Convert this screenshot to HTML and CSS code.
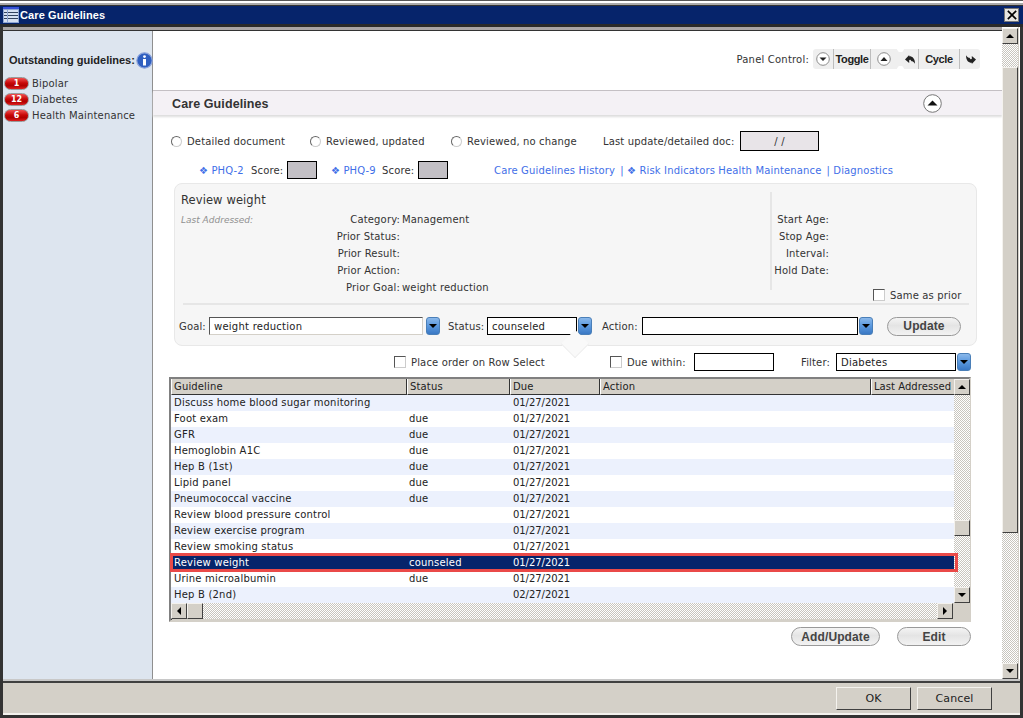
FILE: index.html
```html
<!DOCTYPE html>
<html lang="en">
<head>
<meta charset="utf-8">
<title>Care Guidelines</title>
<link rel="stylesheet" href="styles.css">
</head>
<body>
<div class="window">
  <div class="topedge"></div>
  <header class="titlebar">
    <svg class="appicon" viewBox="0 0 16 16" width="16" height="16">
      <rect x="0" y="0" width="16" height="16" fill="#8fa6d4"/>
      <rect x="0" y="0" width="16" height="2" fill="#3a52d8"/>
      <rect x="1" y="3" width="3" height="12" fill="#d6e0f2"/>
      <rect x="5" y="3" width="10" height="12" fill="#d6e0f2"/>
      <path d="M1 5h3v1H1zM1 8h3v1H1zM1 11h3v1H1zM5 5h10v1H5zM5 8h10v1H5zM5 11h10v1H5z" fill="#33435f"/>
    </svg>
    <span class="titletext">Care Guidelines</span>
    <span class="closebtn"><svg viewBox="0 0 12 12" width="10" height="10"><path d="M1 1l10 10M11 1L1 11" stroke="#000" stroke-width="2"/></svg></span>
  </header>
  <div class="midrow">
    <div class="leftcol">
      <div class="greybar"></div>
      <div class="columns">
        <aside class="sidebar">
          <div class="outstanding"><span>Outstanding guidelines:</span>
            <svg class="infoicon" viewBox="0 0 17 17" width="17" height="17"><circle cx="8.5" cy="8.5" r="7.7" fill="#2f5fc0" stroke="#8fa6dc" stroke-width="1.2"/><circle cx="8.5" cy="4.6" r="1.4" fill="#fff"/><rect x="7" y="7" width="3" height="6.5" fill="#fff"/></svg>
          </div>
          <div class="sideitem"><span class="pill">1</span><span>Bipolar</span></div>
          <div class="sideitem"><span class="pill">12</span><span>Diabetes</span></div>
          <div class="sideitem"><span class="pill">6</span><span>Health Maintenance</span></div>
        </aside>
        <main class="main">
          <div class="panelctl">
            <span class="pclabel">Panel Control:</span>
            <div class="toolbar">
              <span class="tseg tcirc"><svg viewBox="0 0 14 14" width="14" height="14"><circle cx="7" cy="7" r="6.3" fill="#fff" stroke="#8c8c8c"/><path d="M3.5 5.5h7L7 9z" fill="#222"/></svg></span>
              <span class="tseg ttext ttoggle">Toggle</span>
              <span class="tseg tcirc tcirc2"><svg viewBox="0 0 14 14" width="14" height="14"><circle cx="7" cy="7" r="6.3" fill="#fff" stroke="#8c8c8c"/><path d="M3.5 9h7L7 5z" fill="#222"/></svg></span>
              <span class="notch"></span>
              <span class="tseg tarrow"><svg viewBox="0 0 10 9" width="10" height="9"><path d="M0 4.500L4.200 0v1.200C7.800 1.200 10 3.800 10 8.800 8.800 6.800 7.500 6.200 6.500 6.200L5.500 4.800 4.200 5v3z" fill="#222"/></svg></span>
              <span class="tseg ttext tcycle">Cycle</span>
              <span class="tseg tarrow tlast"><svg viewBox="0 0 10 9" width="10" height="9"><path d="M10 4.500L5.800 9V7.800C2.200 7.800 0 5.200 0 .2 1.200 2.200 2.500 2.800 3.500 2.800L4.500 4.200 5.800 4V1z" fill="#222"/></svg></span>
            </div>
          </div>
          <div class="sectionhead">
            <h1>Care Guidelines</h1>
            <svg class="collapse" viewBox="0 0 19 19" width="19" height="19"><circle cx="9.500" cy="9.500" r="8.800" fill="#fff" stroke="#777"/><path d="M4.500 11.500h10L9.500 6.500z" fill="#111"/></svg>
          </div>
          <div class="radiorow">
            <span class="radio"></span><span class="rl1">Detailed document</span>
            <span class="radio"></span><span class="rl2">Reviewed, updated</span>
            <span class="radio"></span><span class="rl3">Reviewed, no change</span>
            <span class="lastdoc">Last update/detailed doc:</span>
            <span class="datebox">/ /</span>
          </div>
          <div class="linkrow">
            <a class="lk1">❖ PHQ-2</a><span class="score1">Score:</span><span class="scorebox"></span>
            <a class="lk2">❖ PHQ-9</a><span class="score1">Score:</span><span class="scorebox"></span>
            <a class="lk3">Care Guidelines History</a><a class="lk4">| ❖ Risk Indicators Health Maintenance</a><a class="lk4">| Diagnostics</a>
          </div>
          <section class="detail">
            <div class="detailtop">
              <div class="detailleft">
                <div class="dtitle">Review weight</div>
                <div class="dgrid">
                  <span class="lastaddr">Last Addressed:</span><span class="dlabel">Category:</span><span class="dval">Management</span>
                  <span></span><span class="dlabel">Prior Status:</span><span class="dval"></span>
                  <span></span><span class="dlabel">Prior Result:</span><span class="dval"></span>
                  <span></span><span class="dlabel">Prior Action:</span><span class="dval"></span>
                  <span></span><span class="dlabel">Prior Goal:</span><span class="dval">weight reduction</span>
                </div>
              </div>
              <div class="detailright">
                <div class="agegrid">
                  <span>Start Age:</span><span>Stop Age:</span><span>Interval:</span><span>Hold Date:</span>
                </div>
              </div>
            </div>
            <label class="sameprior"><span class="check"></span><span>Same as prior</span></label>
            <div class="rule"></div>
            <div class="formrow">
              <span class="fl-goal">Goal:</span>
              <span class="field f-goal sunken">weight reduction</span><span class="dd dd-goal"></span>
              <span class="fl-status">Status:</span>
              <span class="field f-status">counseled</span><span class="dd"></span>
              <span class="fl-action">Action:</span>
              <span class="field f-action"></span><span class="dd"></span>
              <span class="pillbtn updatebtn">Update</span>
            </div>
          </section>
          <div class="filterrow">
            <label class="placeorder"><span class="check"></span><span>Place order on Row Select</span></label>
            <label class="duewithin"><span class="check"></span><span>Due within:</span></label>
            <span class="field f-due"></span>
            <span class="fl-filter">Filter:</span>
            <span class="field f-filter">Diabetes</span><span class="dd"></span>
          </div>
          <div class="grid">
            <div class="gridbody">
              <div class="gridmain">
                <div class="ghead">
                  <span>Guideline</span><span>Status</span><span>Due</span><span>Action</span><span>Last Addressed</span>
                </div>
                <div class="grow odd"><span>Discuss home blood sugar monitoring</span><span></span><span>01/27/2021</span></div>
                <div class="grow"><span>Foot exam</span><span>due</span><span>01/27/2021</span></div>
                <div class="grow odd"><span>GFR</span><span>due</span><span>01/27/2021</span></div>
                <div class="grow"><span>Hemoglobin A1C</span><span>due</span><span>01/27/2021</span></div>
                <div class="grow odd"><span>Hep B (1st)</span><span>due</span><span>01/27/2021</span></div>
                <div class="grow"><span>Lipid panel</span><span>due</span><span>01/27/2021</span></div>
                <div class="grow odd"><span>Pneumococcal vaccine</span><span>due</span><span>01/27/2021</span></div>
                <div class="grow"><span>Review blood pressure control</span><span></span><span>01/27/2021</span></div>
                <div class="grow odd"><span>Review exercise program</span><span></span><span>01/27/2021</span></div>
                <div class="grow"><span>Review smoking status</span><span></span><span>01/27/2021</span></div>
                <div class="grow selected"><span>Review weight</span><span>counseled</span><span>01/27/2021</span></div>
                <div class="grow"><span>Urine microalbumin</span><span>due</span><span>01/27/2021</span></div>
                <div class="grow odd"><span>Hep B (2nd)</span><span></span><span>02/27/2021</span></div>
              </div>
              <div class="vscroll">
                <span class="sbtn"><i class="tri up"></i></span>
                <span class="strack t1"></span>
                <span class="sbtn"></span>
                <span class="strack t2"></span>
                <span class="sbtn"><i class="tri down"></i></span>
              </div>
            </div>
            <div class="hscroll">
              <span class="sbtn"><i class="tri left"></i></span>
              <span class="sbtn"></span>
              <span class="strack hfill"></span>
              <span class="sbtn"><i class="tri right"></i></span>
              <span class="corner"></span>
            </div>
          </div>
          <div class="actions">
            <span class="pillbtn addbtn">Add/Update</span>
            <span class="pillbtn editbtn">Edit</span>
          </div>
        </main>
      </div>
    </div>
    <div class="outerscroll">
      <span class="sbtn"><i class="tri up"></i></span>
      <span class="strack o1"></span>
      <span class="othumb"></span>
      <span class="strack o2"></span>
      <span class="sbtn"><i class="tri down"></i></span>
    </div>
  </div>
  <footer class="footer">
    <span class="winbtn">OK</span>
    <span class="winbtn">Cancel</span>
  </footer>
</div>
</body>
</html>
```
FILE: styles.css
```css
*, *::before, *::after { box-sizing: border-box; }
html, body { margin: 0; padding: 0; background: #fff; }
body { width: 1023px; height: 718px; overflow: hidden; font-family: "DejaVu Sans", Verdana, sans-serif; font-size: 10px; letter-spacing: 0.15px; color: #222; }
.window { width: 1023px; height: 718px; display: flex; flex-direction: column; border-right: 3px solid #333; border-left: 3px solid #333; border-bottom: 3px solid #333; background: #d4d0c8; }
.topedge { height: 6px; margin: 0 -3px; background: linear-gradient(#555 0 1px, #fff 1px 3px, #aaa 3px 5px, #333 5px); flex: none; }
.titlebar { height: 21px; margin: 0 -3px; background: #06246b; display: flex; align-items: center; padding: 0 4px 0 3px; flex: none; border-bottom: 3px solid #2a2a2a; }
.appicon { flex: none; }
.titletext { color: #fff; font-weight: bold; font-size: 11px; margin-left: 1px; font-family: "Liberation Sans", sans-serif; letter-spacing: 0.1px; }
.closebtn { margin-left: auto; width: 15px; height: 14px; background: #e8e6e0; border: 1px solid #777; display: flex; align-items: center; justify-content: center; }
.midrow { display: flex; height: 654px; flex: none; background: #fff; border-bottom: 2px solid #c8c8c8; }
.leftcol { width: 999px; display: flex; flex-direction: column; }
.greybar { height: 4px; background: #a9a5a5; border-bottom: 1px solid #333; flex: none; }
.columns { flex: 1; display: flex; min-height: 0; }
.sidebar { width: 150px; background: #dde5ef; border-right: 1px solid #8f8f8f; padding-top: 20px; flex: none; }
.outstanding { display: flex; align-items: center; font-family: "Liberation Sans", sans-serif; font-weight: bold; padding-left: 6px; height: 18px; margin-bottom: 6px; font-size: 11px; letter-spacing: 0; white-space: nowrap; }
.infoicon { margin-left: 1px; flex: none; }
.sideitem { display: flex; align-items: center; height: 16px; padding-left: 1px; color: #333; }
.pill { width: 25px; height: 13px; border-radius: 6.5px; background: linear-gradient(#f05050, #c80808 45%, #b00000 70%, #e02020); border: 1px solid #9a9a9a; color: #fff; display: flex; align-items: center; justify-content: center; font-size: 8px; font-weight: bold; margin-right: 3px; flex: none; letter-spacing: 0; }
.main { flex: 1; min-width: 0; background: #fff; }
.panelctl { display: flex; justify-content: flex-end; align-items: center; height: 20px; margin-top: 18px; padding-right: 22px; }
.pclabel { margin-right: 4px; color: #333; letter-spacing: 0.2px; }
.toolbar { display: flex; align-items: center; width: 167px; height: 20px; background: #efefef; border-radius: 3px; }
.tseg { height: 100%; display: flex; align-items: center; justify-content: center; border-right: 1px solid #bdbdbd; flex: none; }
.tcirc { width: 21px; }
.tcirc2 { width: 26px; border-right: 0; }
.ttext { font-weight: bold; font-family: "Liberation Sans", sans-serif; letter-spacing: -0.4px; font-size: 11px; color: #222; }
.ttoggle { width: 37px; }
.tcycle { width: 41px; }
.notch { width: 7px; height: 100%; flex: none; background: radial-gradient(circle at 50% 0, #fff 3px, transparent 3.5px), radial-gradient(circle at 50% 100%, #fff 3px, transparent 3.5px); }
.tarrow { width: 15px; padding-right: 2px; }
.tlast { border-right: 0; width: 21px; padding-right: 0; }
.sectionhead { height: 25px; margin-top: 21px; display: flex; align-items: center; background: #f4f1f5; border-top: 1px solid #c4c0c4; box-shadow: 0 2px 2px #ddd; padding: 1px 60px 0 19px; justify-content: space-between; }
.sectionhead h1 { margin: 0; font-family: "Liberation Sans", sans-serif; font-size: 12.5px; font-weight: bold; color: #333; letter-spacing: 0.1px; }
.collapse { flex: none; }
.radiorow { display: flex; align-items: center; height: 20px; margin-top: 16px; padding-left: 18px; color: #333; }
.radio { width: 11px; height: 11px; border-radius: 50%; background: #fff; border: 1.5px solid; border-color: #666 #ccc #ccc #666; flex: none; margin-right: 5px; }
.rl1 { width: 123px; }
.rl2 { width: 125px; }
.rl3 { width: 136px; }
.lastdoc { width: 137px; }
.datebox { width: 79px; height: 20px; background: #e8e4e8; border: 1px solid #000; display: flex; align-items: center; justify-content: center; }
.linkrow { display: flex; align-items: center; height: 18px; margin-top: 10px; padding-left: 46px; color: #333; }
.linkrow a { color: #3f6fe8; }
.lk1 { width: 52px; }
.lk2 { width: 51px; }
.lk3 { margin-left: 32px; margin-right: 5px; }
.lk4 { margin-right: 5px; }
.score1 { width: 36px; }
.scorebox { width: 30px; height: 18px; background: #c3c0c5; border: 1px solid #000; margin-right: 14px; flex: none; }
.detail { margin: 4px 25px 0 21px; height: 163px; background: #f6f6f6; border: 1px solid #e8e8e8; border-radius: 8px; position: relative; padding: 0 11px 0 6px; }
.detail::after { content: ""; position: absolute; left: 390px; bottom: -9px; width: 20px; height: 20px; background: #f9f9f9; transform: rotate(45deg); border-right: 1px solid #eee; border-bottom: 1px solid #eee; z-index: 1; }
.detailtop { display: flex; height: 108px; padding-top: 8px; }
.detailleft { width: 589px; flex: none; }
.dtitle { font-size: 11.5px; height: 19px; line-height: 17px; color: #333; letter-spacing: 0.1px; }
.dgrid { display: grid; grid-template-columns: 147px 70px 1fr; grid-auto-rows: 17px; column-gap: 2px; align-items: center; color: #333; }
.lastaddr { font-style: italic; color: #909090; font-size: 9px; white-space: nowrap; letter-spacing: 0; }
.dlabel { text-align: right; white-space: nowrap; }
.dval { white-space: nowrap; }
.detailright { flex: 1; border-left: 2px solid #e6e6e6; height: 98px; }
.agegrid { display: grid; grid-auto-rows: 17px; width: 57px; margin-top: 19px; justify-items: end; align-items: center; color: #333; white-space: nowrap; }
.sameprior { display: flex; align-items: center; gap: 5px; position: absolute; left: 698px; top: 105px; color: #333; }
.check { width: 12px; height: 12px; background: #fff; border: 1px solid; border-color: #555 #ccc #ccc #555; flex: none; display: inline-block; }
.rule { height: 2px; background: #e6e6e6; margin: 11px -4px 0 2px; }
.formrow { display: flex; align-items: center; height: 20px; margin-top: 11px; color: #333; }
.field { height: 18px; background: #fff; border: 1px solid #000; padding-left: 4px; display: flex; align-items: center; flex: none; color: #222; letter-spacing: 0.25px; }
.sunken { border-color: #555 #d4d0c8 #d4d0c8 #555; }
.dd { width: 14px; height: 18px; border-radius: 3px; background: linear-gradient(#8ab8ea, #5a98de 50%, #3a78c4); flex: none; margin-left: 1px; position: relative; border: 1px solid #4a7fb8; }
.dd-goal { margin-left: 3px; }
.dd::after { content: ""; position: absolute; left: 2px; top: 6px; border: 4px solid transparent; border-top: 4px solid #000; border-bottom: 0; width: 0; height: 0; }
.fl-goal { width: 30px; margin-left: -2px; }
.f-goal { width: 214px; }
.fl-status { width: 39px; margin-left: 8px; }
.f-status { width: 90px; }
.fl-action { width: 40px; margin-left: 10px; }
.f-action { width: 216px; }
.pillbtn { display: flex; align-items: center; justify-content: center; height: 19px; border-radius: 10px; border: 1px solid #999; background: linear-gradient(#f4f4f4, #e4e4e4 45%, #f2f2f2); font-family: "Liberation Sans", sans-serif; font-weight: bold; color: #444; flex: none; font-size: 12px; letter-spacing: 0.1px; }
.updatebtn { width: 74px; margin-left: 14px; }
.filterrow { display: flex; align-items: center; height: 18px; margin-top: 7px; padding-left: 241px; color: #333; }
.filterrow label { display: flex; align-items: center; gap: 5px; }
.placeorder { width: 216px; }
.duewithin { width: 84px; }
.f-due { width: 80px; }
.fl-filter { margin-left: 27px; width: 35px; }
.f-filter { width: 120px; }
.grid { margin: 6px 31px 0 16px; height: 245px; background: #d4d0c8; border: 2px solid; border-color: #808080 #d4d0c8 #d4d0c8 #808080; box-shadow: inset 1px 1px #404040; display: flex; flex-direction: column; }
.gridbody { display: flex; flex: none; height: 224px; }
.gridmain { width: 783px; flex: none; background: #fff; }
.ghead { display: grid; grid-template-columns: 236px 103px 90px 271px 83px; height: 16px; }
.ghead span { background: #d4d0c8; border-right: 1px solid #333; border-bottom: 1px solid #333; border-left: 1px solid #fff; padding-left: 2px; line-height: 15px; color: #222; white-space: nowrap; overflow: hidden; }
.ghead span:last-child { border-right: 0; letter-spacing: 0.05px; }
.grow { display: grid; grid-template-columns: 236px 103px 90px 1fr; height: 16px; line-height: 15px; padding-left: 3px; color: #222; position: relative; white-space: nowrap; letter-spacing: 0.2px; }
.grow span:nth-child(1) { margin-right: -3px; }
.grow span:nth-child(2) { margin-left: -1px; }
.grow span:nth-child(3) { letter-spacing: -0.05px; }
.odd { background: #ecf1fd; }
.selected { background: #06246b; color: #fff; }
.selected::after { content: ""; position: absolute; left: -1px; top: -2px; width: 788px; height: 19px; border: 3px solid #ea4a48; }
.vscroll { width: 16px; flex: none; display: flex; flex-direction: column; }
.sbtn { width: 16px; height: 16px; flex: none; background: #d4d0c8; border: 1px solid; border-color: #f4f2ee #404040 #404040 #f4f2ee; display: flex; align-items: center; justify-content: center; }
.strack { background-color: #fff; background-image: conic-gradient(#c8c5be 25%, #fff 0 50%, #c8c5be 0 75%, #fff 0); background-size: 2px 2px; }
.t1 { height: 125px; }
.t2 { flex: 1; }
.tri { width: 0; height: 0; border: 4px solid transparent; display: block; }
.tri.up { border-bottom: 4px solid #000; border-top: 0; }
.tri.down { border-top: 4px solid #000; border-bottom: 0; }
.tri.left { border-right: 4px solid #000; border-left: 0; }
.tri.right { border-left: 4px solid #000; border-right: 0; }
.hscroll { display: flex; height: 16px; flex: none; }
.hfill { flex: 1; }
.corner { width: 16px; background: #d4d0c8; flex: none; }
.actions { display: flex; justify-content: flex-end; margin-top: 5px; padding-right: 31px; gap: 17px; }
.addbtn { width: 89px; }
.editbtn { width: 74px; }
.outerscroll { width: 16px; flex: none; display: flex; flex-direction: column; padding-top: 1px; box-sizing: content-box; border-right: 1px solid #d4d0c8; }
.o1 { height: 23px; flex: none; }
.othumb { height: 466px; flex: none; background: #d4d0c8; border: 1px solid; border-color: #f4f2ee #404040 #404040 #f4f2ee; }
.o2 { flex: 1; }
.footer { flex: 1; display: flex; justify-content: flex-end; align-items: center; gap: 6px; padding-right: 28px; background: #d4d0c8; border-top: 2px solid #404040; border-bottom: 2px solid #f4f2ee; }
.winbtn { width: 75px; height: 23px; background: #d4d0c8; border: 1px solid; border-color: #f4f2ee #404040 #404040 #f4f2ee; display: flex; align-items: center; justify-content: center; font-size: 11px; color: #222; }
```
